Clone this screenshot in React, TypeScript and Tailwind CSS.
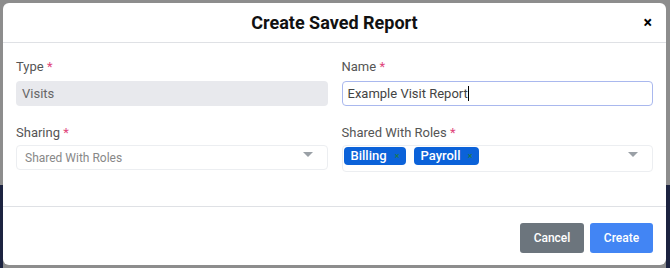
import React from "react";

const Star = () => <span className="text-[#e0457b]">*</span>;

const Caret = () => (
  <svg width="10" height="6" viewBox="0 0 10 6" className="absolute right-[14px] top-[6px]">
    <path d="M0 0 L10 0 L5 5 Z" fill="#9aa0a6" />
  </svg>
);

const Chip = ({ label, w }: { label: string; w: string }) => (
  <div className={`flex items-center justify-between h-[18px] rounded-[4px] bg-[#0b62d9] pl-[7px] pr-[6px] text-white text-[13px] font-medium ${w}`}>
    <span>{label}</span>
    <span className="text-[#1e7a4a] text-[9px] leading-none">×</span>
  </div>
);

export default function App() {
  return (
    <div
      className="w-[670px] h-[268px] bg-[#8d8d8d] relative overflow-hidden"
      style={{ fontFamily: "Roboto, 'Liberation Sans', sans-serif" }}
    >
      <div className="absolute left-0 top-[185px] w-[3px] h-[83px] bg-[#1c2340]" />
      <div className="absolute right-0 top-[185px] w-[4px] h-[83px] bg-[#1c2340]" />
      <div className="absolute left-[3px] top-[3px] w-[663px] h-[262px] bg-white rounded-[6px] flex flex-col">
        <div className="h-[40px] flex items-center justify-center relative border-b border-[#dfe1e5]">
          <span className="text-[18px] font-bold text-[#111]">Create Saved Report</span>
          <span className="absolute right-[14px] top-[12px] text-[16px] font-bold text-black leading-none">×</span>
        </div>
        <div className="flex-1 px-[13px] pt-[14px] grid grid-cols-2 gap-x-[14px] content-start border-b border-[#dfe1e5]">
          <div>
            <div className="text-[13px] text-[#555] h-[18px]">Type <Star /></div>
            <div className="mt-[6px] h-[25px] rounded-[4px] bg-[#e8e9ed] flex items-center px-[6px] text-[13px] text-[#666]">Visits</div>
          </div>
          <div>
            <div className="text-[13px] text-[#555] h-[18px]">Name <Star /></div>
            <div className="mt-[6px] h-[25px] rounded-[4px] border border-[#a9b8ee] flex items-center px-[5px] text-[13px] text-[#444]">
              Example Visit Report<span className="inline-block w-px h-[15px] bg-black" />
            </div>
          </div>
          <div className="mt-[17px]">
            <div className="text-[13px] text-[#555] h-[18px]">Sharing <Star /></div>
            <div className="relative mt-[4px] h-[25px] rounded-[4px] border border-[#eceef1] flex items-center px-[8px] text-[12px] text-[#888]">
              Shared With Roles
              <Caret />
            </div>
          </div>
          <div className="mt-[17px]">
            <div className="text-[13px] text-[#555] h-[18px]">Shared With Roles <Star /></div>
            <div className="relative mt-[4px] h-[27px] rounded-[4px] border border-[#eceef1] flex items-start pt-[1px] pl-[1px] gap-[8px]">
              <Chip label="Billing" w="w-[62px]" />
              <Chip label="Payroll" w="w-[65px]" />
              <Caret />
            </div>
          </div>
        </div>
        <div className="h-[58px] flex items-center justify-end gap-[6px] pr-[13px] pt-[4px]">
          <button className="w-[64px] h-[30px] rounded-[3px] bg-[#6c757d] text-white text-[12px] font-medium">Cancel</button>
          <button className="w-[63px] h-[30px] rounded-[3px] bg-[#4285f4] text-white text-[12px] font-medium">Create</button>
        </div>
      </div>
    </div>
  );
}
